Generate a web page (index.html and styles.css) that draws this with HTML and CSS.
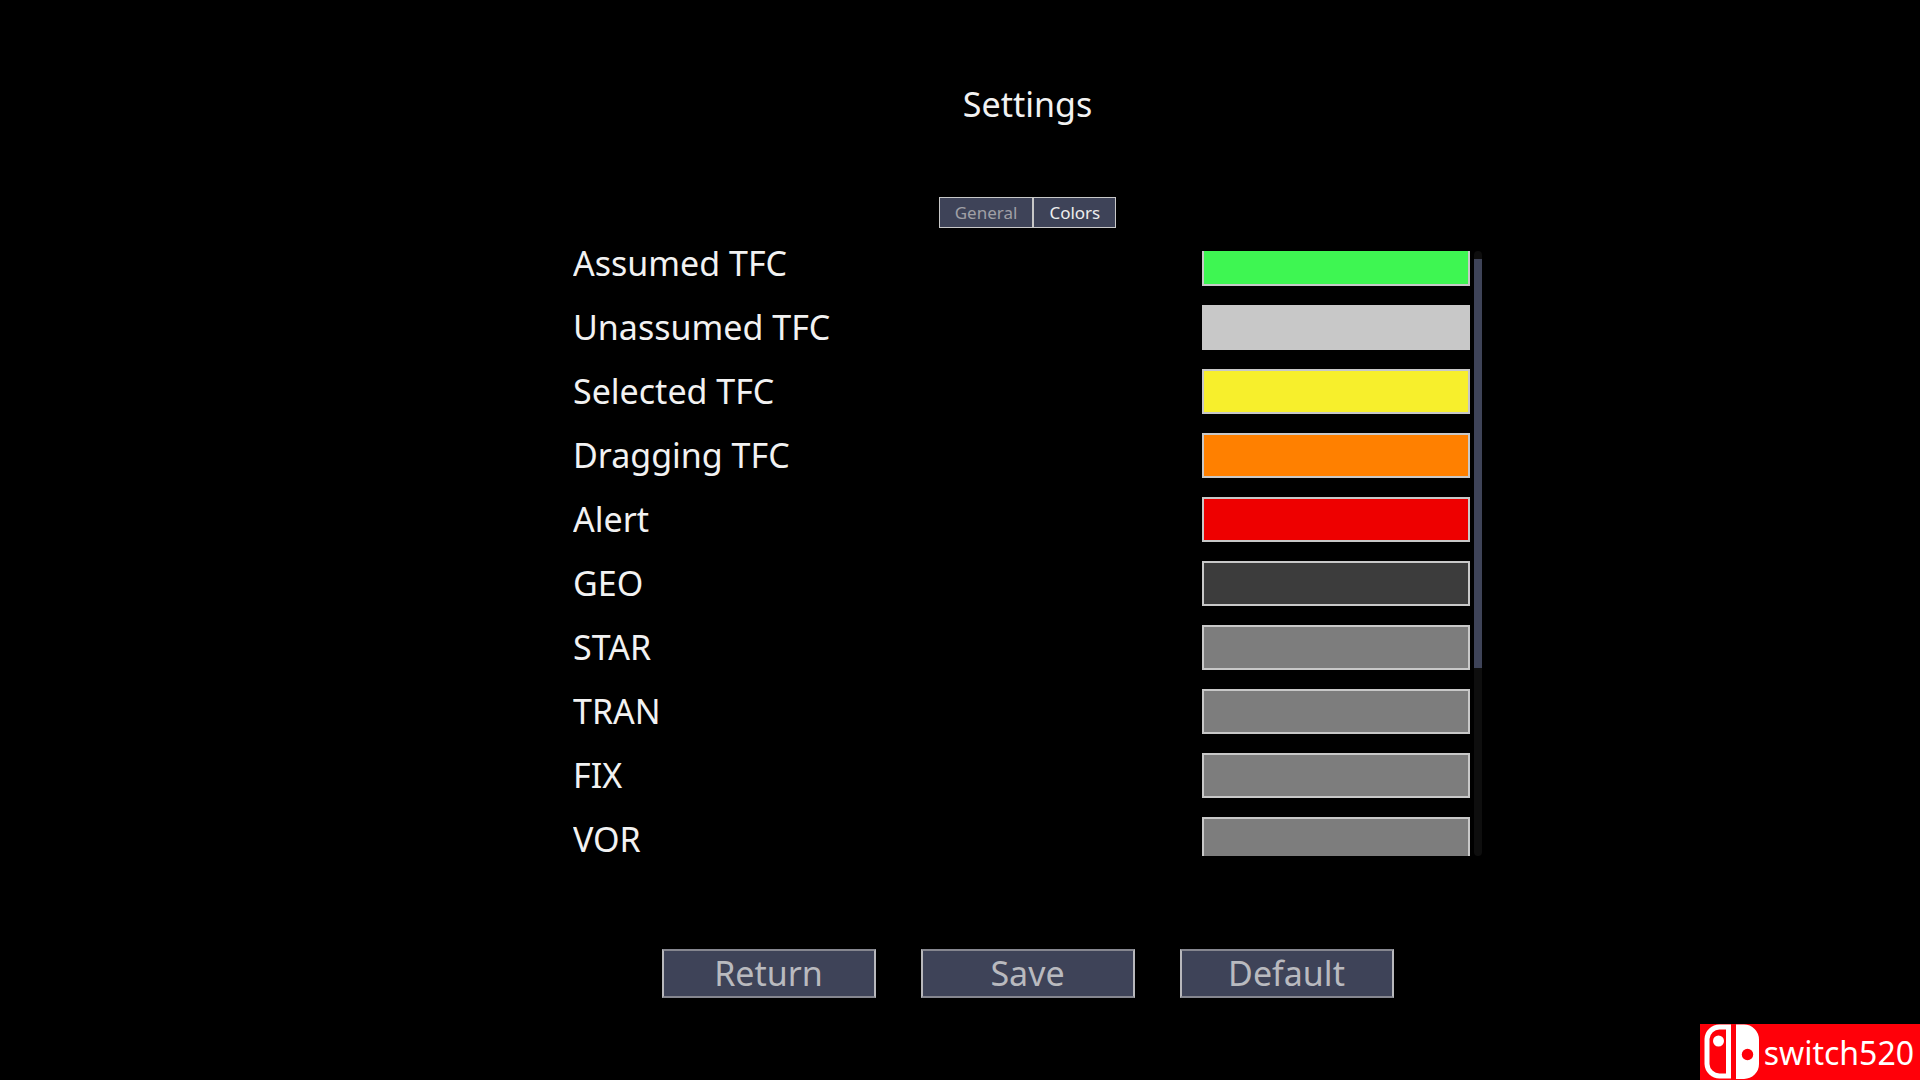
FILE: index.html
```html
<!DOCTYPE html>
<html lang="en">
<head>
    <meta charset="utf-8">
    <title>Settings</title>
    <link rel="stylesheet" href="styles.css">
</head>
<body>
    <main class="settings">
        <h1>Settings</h1>

        <div class="tabs" role="tablist">
            <button class="tab" type="button" role="tab" aria-selected="false">General</button>
            <button class="tab active" type="button" role="tab" aria-selected="true">Colors</button>
        </div>

        <form class="panel" id="colorForm">
            <div class="viewport">
                <div class="color-list">
                    <div class="row">
                        <label for="assumed">Assumed TFC</label>
                        <input type="color" id="assumed" value="#3ef652">
                    </div>
                    <div class="row">
                        <label for="unassumed">Unassumed TFC</label>
                        <input type="color" id="unassumed" value="#c8c8c8">
                    </div>
                    <div class="row">
                        <label for="selected">Selected TFC</label>
                        <input type="color" id="selected" value="#f7ef2c">
                    </div>
                    <div class="row">
                        <label for="dragging">Dragging TFC</label>
                        <input type="color" id="dragging" value="#ff8000">
                    </div>
                    <div class="row">
                        <label for="alert">Alert</label>
                        <input type="color" id="alert" value="#ee0000">
                    </div>
                    <div class="row">
                        <label for="geo">GEO</label>
                        <input type="color" id="geo" value="#3c3c3c">
                    </div>
                    <div class="row">
                        <label for="star">STAR</label>
                        <input type="color" id="star" value="#7d7d7d">
                    </div>
                    <div class="row">
                        <label for="tran">TRAN</label>
                        <input type="color" id="tran" value="#7d7d7d">
                    </div>
                    <div class="row">
                        <label for="fix">FIX</label>
                        <input type="color" id="fix" value="#7d7d7d">
                    </div>
                    <div class="row">
                        <label for="vor">VOR</label>
                        <input type="color" id="vor" value="#7d7d7d">
                    </div>
                </div>
            </div>
            <div class="scrollbar">
                <div class="thumb"></div>
            </div>
        </form>

        <div class="actions">
            <button type="button">Return</button>
            <button type="submit" form="colorForm">Save</button>
            <button type="reset" form="colorForm">Default</button>
        </div>
    </main>

    <div class="badge">
        <svg width="56" height="56" viewBox="0 0 56 56" aria-hidden="true">
            <path d="M16 3H24.500V52H16A12.500 12.500 0 0 1 3 40V15A12.500 12.500 0 0 1 16 3Z" fill="none" stroke="#fff" stroke-width="5"/>
            <circle cx="14.500" cy="17" r="5.500" fill="#fff"/>
            <path d="M32 0.500H40A15 15 0 0 1 55 15.500V40A15 15 0 0 1 40 55H32Z" fill="#fff"/>
            <circle cx="43.500" cy="30.500" r="5.700" fill="#ff0009"/>
        </svg>
        <span>switch520</span>
    </div>
</body>
</html>
```
FILE: styles.css
```css
* {
    box-sizing: border-box;
}
body {
    margin: 0;
    background-color: #000;
    color: #f2f2f2;
    font-family: "Noto Sans", sans-serif;
    font-size: 34px;
    line-height: 46px;
}
.settings {
    display: flex;
    flex-direction: column;
    align-items: center;
    padding: 81px 0 0 135px;
}
h1 {
    margin: 0;
    font-size: 34px;
    font-weight: normal;
}
button {
    font-family: inherit;
    background-color: #3e4358;
    cursor: pointer;
}

/* tabs */
.tabs {
    display: flex;
    margin-top: 70px;
}
.tab {
    padding: 3px 15px;
    border: 1px solid #c8c8c8;
    color: #a0a0a6;
    font-size: 17px;
    line-height: 23px;
}
.tab.active {
    color: #eee;
}

/* color list */
.panel {
    display: flex;
    gap: 4px;
    width: 100%;
    max-width: 909px;
    height: 56vh;
    margin-top: 23px;
}
.viewport {
    flex: 1;
    overflow: hidden;
}
.color-list {
    display: flex;
    flex-direction: column;
    gap: 19px;
    margin-top: -10px;
}
.row {
    display: flex;
    align-items: center;
    justify-content: space-between;
    height: 45px;
}
.row label {
    padding-bottom: 2px;
}
input[type="color"] {
    appearance: none;
    width: 268px;
    height: 45px;
    padding: 0;
    border: 2px solid #c8c8c8;
    background: none;
    cursor: pointer;
}
input[type="color"]::-webkit-color-swatch-wrapper {
    padding: 0;
}
input[type="color"]::-webkit-color-swatch {
    border: none;
}
.scrollbar {
    width: 8px;
    padding-top: 8px;
    border-radius: 4px;
    background-color: #0e0e0e;
}
.thumb {
    height: 409px;
    background-color: #3e4358;
}

/* bottom buttons */
.actions {
    display: flex;
    gap: 45px;
    margin-top: 93px;
}
.actions button {
    width: 214px;
    padding: 0;
    border: 2px solid;
    border-color: #85868f #b8b8bc;
    color: #b9babf;
    font-size: 34px;
    line-height: 45px;
}

.badge {
    position: fixed;
    right: 0;
    bottom: 0;
    display: flex;
    align-items: center;
    gap: 4px;
    height: 56px;
    padding: 0 6px 0 4px;
    background-color: #ff0009;
    color: #fff;
    font-size: 32px;
}
.badge span {
    padding-top: 2px;
}
```
